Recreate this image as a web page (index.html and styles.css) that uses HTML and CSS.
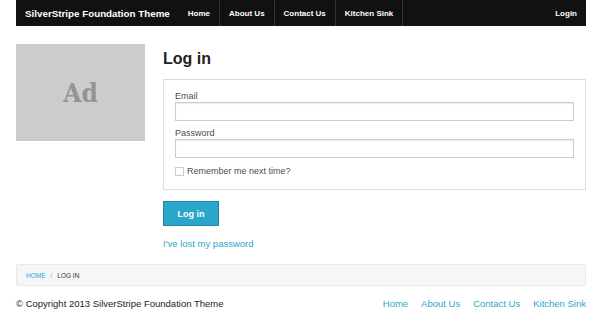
FILE: index.html
```html
<!DOCTYPE HTML>
<html>

<head>
    <meta charset="UTF-8">
    <title>Log in</title>
    <link rel="stylesheet" href="styles.css">
</head>

<body>
    <div class="page">
        <nav class="top-bar">
            <a class="brand" href="#">SilverStripe Foundation Theme</a>
            <ul class="menu">
                <li><a href="#">Home</a></li>
                <li><a href="#">About Us</a></li>
                <li><a href="#">Contact Us</a></li>
                <li><a href="#">Kitchen Sink</a></li>
            </ul>
            <a class="login-link" href="#">Login</a>
        </nav>

        <div class="main">
            <aside class="sidebar">
                <div class="ad">Ad</div>
            </aside>

            <section class="content">
                <h1>Log in</h1>
                <form class="login-form">
                    <fieldset>
                        <label for="email">Email</label>
                        <input type="text" id="email">
                        <label for="password" class="spaced">Password</label>
                        <input type="password" id="password">
                        <div class="remember">
                            <input type="checkbox" id="remember">
                            <label for="remember">Remember me next time?</label>
                        </div>
                    </fieldset>
                    <button type="button" class="button">Log in</button>
                </form>
                <a class="lost" href="#">I've lost my password</a>
            </section>
        </div>

        <ul class="breadcrumbs">
            <li><a href="#">Home</a></li>
            <li class="sep">/</li>
            <li class="current">Log in</li>
        </ul>

        <footer class="footer">
            <span>&copy; Copyright 2013 SilverStripe Foundation Theme</span>
            <ul class="footer-links">
                <li><a href="#">Home</a></li>
                <li><a href="#">About Us</a></li>
                <li><a href="#">Contact Us</a></li>
                <li><a href="#">Kitchen Sink</a></li>
            </ul>
        </footer>
    </div>
</body>

</html>
```

FILE: styles.css
```css
body {
    margin: 0;
    background: #fff;
    color: #222;
    font-family: "Liberation Sans", Arial, sans-serif;
}

a {
    color: #2ba6cb;
    text-decoration: none;
}

ul {
    margin: 0;
    padding: 0;
    list-style: none;
}

.page {
    width: 570px;
    margin: 0 16px;
}

/* top bar */
.top-bar {
    display: flex;
    align-items: stretch;
    height: 26px;
    background: #111;
}

.brand {
    display: flex;
    align-items: center;
    padding: 0 9px;
    color: #fff;
    font-size: 9.8px;
    font-weight: bold;
}

.menu {
    display: flex;
}

.menu li {
    display: flex;
    border-right: 1px solid #333;
}

.menu a,
.login-link {
    display: flex;
    align-items: center;
    padding: 0 9px;
    color: #fff;
    font-size: 8px;
    font-weight: bold;
}

.login-link {
    margin-left: auto;
}

/* main */
.main {
    display: flex;
    gap: 18px;
    margin-top: 18px;
}

.sidebar {
    width: 129px;
    flex: none;
}

.ad {
    display: flex;
    align-items: center;
    justify-content: center;
    height: 97px;
    background: #ccc;
    color: #939393;
    font-family: "DejaVu Serif Condensed", "DejaVu Serif", serif;
    font-size: 26px;
    font-weight: bold;
}

.content {
    flex: 1;
}

h1 {
    margin: 5px 0 10px;
    font-size: 16px;
    line-height: 20px;
    color: #222;
}

fieldset {
    margin: 0;
    padding: 11px 11px 12px;
    border: 1px solid #ddd;
}

label {
    display: block;
    font-size: 9px;
    line-height: 11px;
    color: #4d4d4d;
}

label.spaced {
    margin-top: 7px;
}

fieldset input[type="text"],
fieldset input[type="password"] {
    display: block;
    box-sizing: border-box;
    width: 100%;
    height: 19px;
    margin: 0;
    border: 1px solid #ccc;
    box-shadow: inset 0 1px 1px rgba(0, 0, 0, 0.08);
    background: #fff;
}

.remember {
    display: flex;
    align-items: center;
    gap: 3px;
    margin-top: 8px;
}

.remember input {
    width: 9px;
    height: 9px;
    margin: 0;
    appearance: none;
    border: 1px solid #ccc;
    background: #fff;
}

.button {
    display: block;
    width: 56px;
    height: 25px;
    margin-top: 11px;
    padding: 0;
    border: 1px solid #2284a1;
    background: #2ba6cb;
    color: #fff;
    font-family: "Liberation Sans", Arial, sans-serif;
    font-size: 9px;
    font-weight: bold;
}

.lost {
    display: inline-block;
    margin-top: 12px;
    font-size: 9.5px;
    line-height: 12px;
}

/* breadcrumbs */
.breadcrumbs {
    display: flex;
    align-items: center;
    gap: 5px;
    box-sizing: border-box;
    height: 22px;
    margin-top: 13px;
    padding: 0 9px;
    background: #f6f6f6;
    border: 1px solid #e9e9e9;
    border-radius: 2px;
    font-size: 6.5px;
    text-transform: uppercase;
}

.breadcrumbs .sep {
    color: #aaa;
}

.breadcrumbs .current {
    color: #333;
}

/* footer */
.footer {
    display: flex;
    justify-content: space-between;
    margin-top: 12px;
    font-size: 9.5px;
    line-height: 12px;
}

.footer-links {
    display: flex;
    gap: 13px;
}
```
